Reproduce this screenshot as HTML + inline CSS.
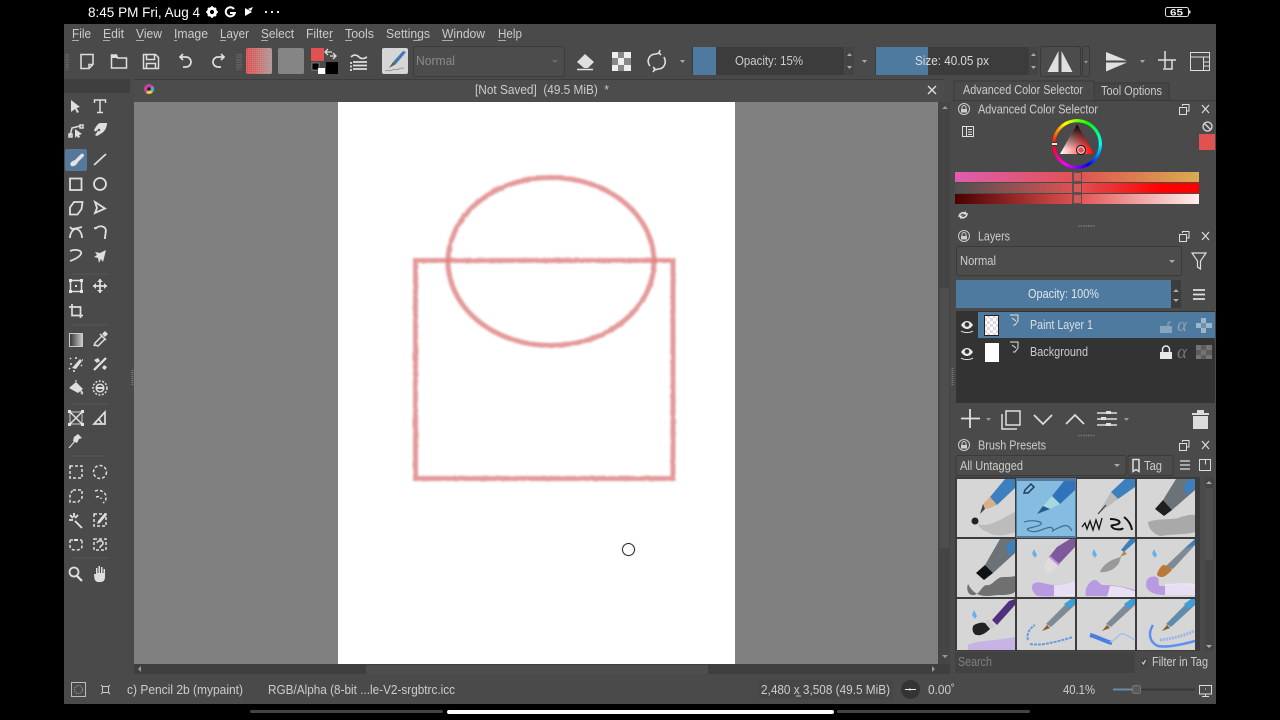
<!DOCTYPE html>
<html><head><meta charset="utf-8"><style>
html,body{margin:0;padding:0;background:#000;width:1280px;height:720px;overflow:hidden}
svg{position:absolute;left:0;top:0;filter:blur(.35px)}
text{font-family:"Liberation Sans",sans-serif;font-size:13px;fill:#cccccc}
.i{fill:none;stroke:#dedede;stroke-width:1.5}
.f{fill:#dedede;stroke:none}
#wheel{position:absolute;left:1052px;top:119px;width:50px;height:50px;border-radius:50%;filter:blur(.3px);background:conic-gradient(from 270deg,#f00,#ff0,#0f0,#0ff,#00f,#f0f,#f00);-webkit-mask:radial-gradient(circle,transparent 21.5px,#000 22px);mask:radial-gradient(circle,transparent 21.5px,#000 22px)}
</style></head><body>
<svg width="1280" height="720" viewBox="0 0 1280 720" xmlns="http://www.w3.org/2000/svg">
<defs>
<filter id="rough" x="-5%" y="-5%" width="110%" height="110%"><feTurbulence type="fractalNoise" baseFrequency="0.2" numOctaves="2" seed="3"/><feDisplacementMap in="SourceGraphic" scale="1.6"/><feGaussianBlur stdDeviation="1.1"/></filter>
<linearGradient id="g1"><stop offset="0" stop-color="#e05cb0"/><stop offset=".5" stop-color="#e05252"/><stop offset="1" stop-color="#d8ac50"/></linearGradient>
<linearGradient id="g2"><stop offset="0" stop-color="#505050"/><stop offset=".5" stop-color="#e05252"/><stop offset=".85" stop-color="#ff0000"/><stop offset="1" stop-color="#ff0000"/></linearGradient>
<linearGradient id="g3"><stop offset="0" stop-color="#4a0000"/><stop offset=".5" stop-color="#e05252"/><stop offset="1" stop-color="#fff0f0"/></linearGradient>
<linearGradient id="t1" x1="0" x2="1" y1="0" y2="0"><stop offset="0" stop-color="#fff"/><stop offset="1" stop-color="#f00"/></linearGradient>
<linearGradient id="t2" x1="0" x2="0" y1="0" y2="1"><stop offset="0" stop-color="#000"/><stop offset=".85" stop-color="#000" stop-opacity="0"/></linearGradient>
<linearGradient id="grad" x1="0" x2="1"><stop offset="0" stop-color="#333"/><stop offset="1" stop-color="#ccc"/></linearGradient>
<linearGradient id="fg" x1="0" x2="1"><stop offset="0" stop-color="#e05252"/><stop offset="1" stop-color="#b09a9a"/></linearGradient>
<pattern id="chk" width="6" height="6" patternUnits="userSpaceOnUse"><rect width="6" height="6" fill="#fff"/><rect width="3" height="3" fill="#e2d8d8"/><rect x="3" y="3" width="3" height="3" fill="#e2d8d8"/></pattern>
<pattern id="dots" width="2" height="2" patternUnits="userSpaceOnUse"><rect width="1" height="1" fill="#e8b0b0"/></pattern>
</defs>

<rect x="64" y="24" width="1152" height="680" fill="#4a4a4a"/>
<text x="88" y="17" textLength="112" lengthAdjust="spacingAndGlyphs" style="font-size:14px;fill:#fff">8:45 PM Fri, Aug 4</text>
<circle cx="212" cy="12" r="3.6" fill="none" stroke="#fff" stroke-width="3"/>
<path d="M212 6v2M212 16v2M206 12h2M216 12h2M208 8l1.500 1.500M216 8l-1.500 1.500M208 16l1.500-1.500M216 16l-1.500-1.500" stroke="#fff" stroke-width="1.6"/>
<path d="M234 9a4.600 4.600 0 1 0 .8 4H230" fill="none" stroke="#fff" stroke-width="2"/>
<path d="M245 8l7 4-7 4zM248 9l5-2-2 4z" fill="#fff"/>
<circle cx="266" cy="12" r="1.1" fill="#fff"/><circle cx="272" cy="12" r="1.1" fill="#fff"/><circle cx="278" cy="12" r="1.1" fill="#fff"/>
<rect x="1165.500" y="7.500" width="23" height="9" rx="2" fill="none" stroke="#ddd"/><rect x="1189" y="10.500" width="1.500" height="3" fill="#ddd"/>
<text x="1170" y="15.500" textLength="13" lengthAdjust="spacingAndGlyphs" style="font-size:9px;fill:#eee;font-weight:bold">65</text>

<g>
<text x="72" y="38" textLength="19" lengthAdjust="spacingAndGlyphs">File</text>
<text x="103" y="38" textLength="21" lengthAdjust="spacingAndGlyphs">Edit</text>
<text x="136" y="38" textLength="26" lengthAdjust="spacingAndGlyphs">View</text>
<text x="174" y="38" textLength="34" lengthAdjust="spacingAndGlyphs">Image</text>
<text x="220" y="38" textLength="29" lengthAdjust="spacingAndGlyphs">Layer</text>
<text x="261" y="38" textLength="33" lengthAdjust="spacingAndGlyphs">Select</text>
<text x="306" y="38" textLength="27" lengthAdjust="spacingAndGlyphs">Filter</text>
<text x="345" y="38" textLength="29" lengthAdjust="spacingAndGlyphs">Tools</text>
<text x="386" y="38" textLength="44" lengthAdjust="spacingAndGlyphs">Settings</text>
<text x="442" y="38" textLength="43" lengthAdjust="spacingAndGlyphs">Window</text>
<text x="498" y="38" textLength="24" lengthAdjust="spacingAndGlyphs">Help</text>
</g>
<path d="M72 40.500h7M103 40.500h7M136 40.500h8M174 40.500h3M220 40.500h6M261 40.500h7M329 40.500h4M345 40.500h7M413 40.500h6M442 40.500h11M498 40.500h8" stroke="#aaa"/>

<path d="M66 54v16M68 54v16M241 54v16M237 54v16M239 54v16" stroke="#777" stroke-dasharray="1.500 1"/>
<path class="i" d="M81 54.500h12v10l-4 4h-8zM93 64.500h-4v4"/>
<path class="i" d="M111.500 55v13h15V58h-9l-1-3z"/><path class="f" d="M112 55h5l1 3h-6z"/>
<path class="i" d="M143.500 54.500h12l3 3v11h-15zM146.500 54.500v5h8v-5M146.500 68.500v-5h9v5"/>
<path class="i" style="stroke-width:1.700" d="M183 54l-3 3 3 3M180 57h6a5 5 0 0 1 0 10h-3"/>
<path class="i" style="stroke-width:1.700" d="M221 54l3 3-3 3M224 57h-6a5 5 0 0 0 0 10h3"/>
<rect x="246" y="48" width="26" height="26" rx="2" fill="url(#fg)"/><rect x="246" y="48" width="26" height="26" rx="2" fill="url(#dots)" opacity=".3"/>
<rect x="278" y="48" width="26" height="26" rx="2" fill="#858585"/>
<rect x="311" y="48" width="13" height="13" fill="#e05252"/>
<rect x="326" y="62" width="12" height="12" fill="#000"/>
<rect x="312" y="63" width="7" height="7" fill="#000" stroke="#ccc" stroke-width=".5"/><rect x="318" y="68" width="7" height="6" fill="#fff"/>
<path d="M328 49l-3 3 3 3M332 52h-6M333 53l3 3-3 3M330 56h6" fill="none" stroke="#ddd" stroke-width="1.300"/>
<path class="i" style="stroke-width:1.700" d="M351 57c3-3 6-2 8 0s5 2 8 0M353 62h14M353 65.500h14M353 69h14"/><path d="M351 62v2M351 65.500v2M351 69v2" stroke="#e4e4e4" stroke-width="1.700"/>
<rect x="382" y="48" width="26" height="26" rx="2" fill="#d6d6d6"/><path d="M393 62l10-11 3 1-10 12z" fill="#3f78b4"/><path d="M393 62l-4 6 7-4z" fill="#6b5a40"/><path d="M385 71c3-2 4 1 7-1s4 1 7-1 3 0 5-1" stroke="#999" fill="none"/>
<rect x="413.500" y="46.500" width="151" height="30" rx="2" fill="#4c4c4c" stroke="#3c3c3c"/>
<text x="416" y="65" textLength="39" lengthAdjust="spacingAndGlyphs" style="fill:#8a8a8a">Normal</text>
<path d="M552 60h6l-3 3z" fill="#6a6a6a"/>
<path d="M577 62l8-8 9 8-6 6h-4z" fill="#e0e0e0"/><path d="M577 69.500h16" stroke="#e4e4e4" stroke-width="1.500"/>
<rect x="612" y="52" width="19" height="19" fill="#888"/><path d="M612 52h6v6h-6zM624 52h7v6h-7zM618 58h6v7h-6zM612 65h6v6h-6zM624 65h7v6h-7z" fill="#eee"/>
<path class="i" style="stroke-width:1.600" d="M650 66c-4-5-1-12 6-12l3-1M664 57c3 6 0 12-6 12l-3 1M660 50l-1 3 2 2M653 72l2-3-2-2"/>
<path d="M680 60h5l-2.500 3z" fill="#aaa"/>
<rect x="692" y="47" width="152" height="28" fill="#3c3c3c"/><rect x="693" y="47" width="23" height="28" fill="#4f7a9f"/>
<text x="735" y="65" textLength="68" lengthAdjust="spacingAndGlyphs">Opacity: 15%</text>
<rect x="845" y="47" width="9" height="28" fill="#444"/><path d="M847 56l2.500-3 2.500 3zM847 66l2.500 3 2.500-3z" fill="#aaa"/>
<path d="M862 60h5l-2.500 3z" fill="#aaa"/>
<rect x="875" y="47" width="154" height="28" fill="#3c3c3c"/><rect x="876" y="47" width="52" height="28" fill="#4f7a9f"/>
<text x="915" y="65" textLength="74" lengthAdjust="spacingAndGlyphs" style="fill:#dcdcdc">Size: 40.05 px</text>
<rect x="1030" y="47" width="8" height="28" fill="#444"/><path d="M1031 56l2.500-3 2.500 3zM1031 66l2.500 3 2.500-3z" fill="#aaa"/>
<rect x="1040.500" y="46.500" width="40" height="30" rx="2" fill="#4c4c4c" stroke="#3a3a3a"/>
<path d="M1058.500 51v21h-11zM1061.500 51v21h11z" fill="#e0e0e0"/>
<rect x="1082.500" y="46.500" width="7" height="30" rx="2" fill="#4c4c4c" stroke="#3a3a3a"/><path d="M1084 61h4l-2 2.500z" fill="#999"/>
<path d="M1106 52l21 8.500h-21zM1106 62.500h21l-21 9z" fill="#e0e0e0"/>
<path d="M1140 60h5l-2.500 3z" fill="#aaa"/>
<path class="i" d="M1165 51v17M1158 60h18M1163 69h9v-9"/>
<rect x="1190.500" y="52.500" width="19" height="18" fill="none" stroke="#ddd"/><path d="M1190.500 57h19M1203.500 57v14M1203.500 62h6M1203.500 66h6" stroke="#ddd"/>

<rect x="64" y="79" width="66" height="14" fill="#3f3f3f"/>
<path d="M132.500 370v16" stroke="#777" stroke-dasharray="1 1" stroke-width="2"/>
<g id="tools">
<path class="f" d="M71 100l9 7-3.500 1 2.500 4-2 1-2-4-4 3z"/>
<path class="i" d="M94.500 103v-3h11v3M100 100v12M97 112.500h6"/>
<path class="i" d="M70 136l2-8 8-2"/><rect x="69" y="134" width="3" height="3" class="i"/><rect x="80" y="125" width="3" height="3" class="i"/><path class="f" d="M75 129l7 5-3 1 1 2-2 1-1-2-2 2z"/>
<path class="f" d="M100 123l7 0c0 4-2 8-5 10l-5 3-2-1 3-4-1-1c-1 2-2 2-3 0 2-3 3-6 6-7z"/><circle cx="99" cy="130" r="1.200" fill="#4a4a4a"/>
<rect x="65" y="149" width="22" height="22" rx="2" fill="#56789a"/>
<path d="M71 166c-2-4 2-5 4-6l6-6c2-1 3 0 3 2l-6 6c-1 2-3 5-7 4z" fill="#e4e4e4"/>
<path class="i" style="stroke-width:1.700" d="M94 165l12-11"/>
<rect x="70" y="178.500" width="11.500" height="11.500" class="i" style="stroke-width:1.800"/>
<circle cx="100" cy="184" r="6" class="i" style="stroke-width:1.800"/>
<path class="i" style="stroke-width:1.800" d="M74 202h8.500l-1 7-4 5.500H70v-7z"/>
<path class="i" style="stroke-width:1.800" d="M95 202l10 6.500L95 213l2-5z"/>
<path class="i" style="stroke-width:1.800" d="M70 238c0-5 3-9 6-9s6 4 6 9M70 227l2 2 6-1 4-1"/>
<path class="i" style="stroke-width:1.800" d="M95 229c4-4 8-3 10-1s0 6 0 10M94 228h3M104 238h2"/>
<path class="i" style="stroke-width:1.800" d="M70 251c5-2 10-1 11 1s-2 6-11 9"/>
<path class="f" d="M106 250l-3 12-2-3-2 4-1-5-4-1 3-2-2-3 5 1z"/>
<rect x="70.500" y="280.500" width="11" height="11" class="i"/><path d="M69 279h3v3h-3zM80 279h3v3h-3zM69 290h3v3h-3zM80 290h3v3h-3zM75 285h2v2h-2z" fill="#e4e4e4"/>
<path class="i" style="stroke-width:1.700" d="M93 286h14M100 279v14"/><path class="f" d="M93 286l3-3v6zM107 286l-3-3v6zM100 279l-3 3h6zM100 293l-3-3h6z"/>
<path class="i" style="stroke-width:1.700" d="M72 304v11.500h11M69 307h11.500v11"/>
<rect x="69.500" y="333.500" width="13" height="13" fill="url(#grad)" stroke="#ccc"/>
<path class="i" d="M95 345l-1 1 1-3 7-7 3 3-7 7zM100 334l6 6"/><path class="f" d="M102 334l3-3 3 3-3 3z"/>
<path class="f" d="M72 368l8-9 2 2-6 8z"/><path d="M70 358l1 1M70 364h2M74 372v-2M81 365l1 1M76 357v2M83 360h-1M69 369l1-1" stroke="#e4e4e4" stroke-width="1.500"/>
<path d="M94 370l12-12" stroke="#e4e4e4" stroke-width="2.200"/><path class="f" d="M94 360l4-2 2 3-3 2zM104 365l3 2-2 3-3-2z"/>
<path class="f" d="M69 388l7-6 7 7-5 4z"/><path d="M81 391c2 1 2 3 1 3s-1-2-1-3zM76 382v-2" stroke="#e4e4e4"/>
<circle cx="100" cy="388" r="7" class="i" stroke-dasharray="2 1.500"/><circle cx="100" cy="388" r="3.800" class="i"/><path class="f" d="M96 387h8v2h-8z"/>
<rect x="70" y="412" width="12" height="12" class="i" style="stroke:#ccc;stroke-width:1"/><path class="i" d="M70 412l12 12M82 412l-12 12"/><path d="M68 410h3v3h-3zM81 410h3v3h-3zM68 423h3v3h-3zM81 423h3v3h-3z" fill="#e4e4e4"/>
<path class="i" style="stroke-width:1.700" d="M94 424l11-12v12zM99 419l3 5"/>
<path class="f" d="M74 437l4-3 4 4-3 1-2 4-4-2z"/><path d="M69 448l6-7" stroke="#e4e4e4"/>
<rect x="70" y="466" width="12" height="12" class="i" stroke-dasharray="3 2"/>
<circle cx="100" cy="472" r="6.500" class="i" stroke-dasharray="3 2"/>
<path class="i" stroke-dasharray="3 2" d="M73 490h9v8l-4 4h-8v-8z"/>
<path class="i" stroke-dasharray="3 2" d="M95 491c5-2 11 1 11 6s-2 5-3 6M96 497c3-1 5 0 5 2"/>
<path d="M70 515l3 3M74 513v4M78 515l-3 3M69 520h4M75 521l7 7" stroke="#e4e4e4" stroke-width="1.800"/>
<rect x="94" y="514" width="12" height="12" class="i" stroke-dasharray="3 2"/><path class="f" d="M105 513l2 2-1 1-6 7-3 1 1-3 6-7z"/>
<path class="i" stroke-dasharray="3 2" d="M70 540h12M70 540v6c0 3 2 4 6 4s6-1 6-4v-6"/><rect x="74" y="539" width="4" height="2" fill="#e4e4e4"/>
<path class="i" stroke-dasharray="3 2" d="M94 539h12v11H94z"/><path class="i" d="M97 543c1-3 6-3 6 0s-3 2-3 5"/>
<circle cx="74" cy="572" r="4.500" class="i" style="stroke-width:1.800"/><path d="M77 576l5 5" stroke="#e4e4e4" stroke-width="2.200"/>
<path class="f" d="M94 574l2 0v-6h1.500v5h1v-7h1.500v7h1v-6h1.500v6h1v-4h1.500v8c0 3-1.500 5-4.500 5h-2c-2 0-3-1-4-3z"/>
</g>
<path d="M72 274h36M72 325h36M72 404h36M72 456h36M72 558h36" stroke="#555"/>

<rect x="134" y="79" width="810" height="24" fill="#4c4c4c"/>
<path d="M134 79.500h810" stroke="#3c3c3c"/>
<circle cx="149" cy="89" r="5" fill="#d040a0"/><path d="M149 89l4 -3a5 5 0 0 1 0 6z" fill="#40b0d0"/><path d="M149 89l-3 4a5 5 0 0 0 7-1z" fill="#e0d040"/><circle cx="149" cy="89" r="1.800" fill="#222"/>
<text x="475" y="94" textLength="134" lengthAdjust="spacingAndGlyphs" xml:space="preserve">[Not Saved]  (49.5 MiB)  *</text>
<path d="M928 86l8 8M936 86l-8 8" stroke="#ddd" stroke-width="1.400"/>
<rect x="134" y="102" width="804" height="562" fill="#808080"/>
<rect x="338" y="102" width="397" height="562" fill="#fff"/>
<g filter="url(#rough)" fill="none" stroke="#dd8080" stroke-opacity=".8" stroke-width="5">
<ellipse cx="551" cy="261.500" rx="103" ry="84"/>
<rect x="415.500" y="260.500" width="257.500" height="218"/>
</g>
<circle cx="628.500" cy="549.500" r="6" fill="none" stroke="#222"/>
<circle cx="628.500" cy="549.500" r="7" fill="none" stroke="#eee" stroke-width=".8"/>
<rect x="938" y="102" width="12" height="562" fill="#454545"/>
<rect x="940" y="288" width="9" height="260" fill="#4e4e4e"/>
<path d="M942 109l3-3 3 3zM942 655l3 3 3-3z" fill="#999"/>
<rect x="134" y="664" width="816" height="10" fill="#3f3f3f"/>
<rect x="366" y="665" width="342" height="9" rx="2" fill="#4e4e4e"/>
<path d="M141 666l-3 3 3 3zM932 666l3 3-3 3z" fill="#999"/>

<path d="M954 100V81h140v21" fill="#4a4a4a" stroke="#3a3a3a"/>
<text x="963" y="94" textLength="120" lengthAdjust="spacingAndGlyphs">Advanced Color Selector</text>
<path d="M1094 100V83h75v17" fill="#454545" stroke="#3a3a3a"/>
<text x="1101" y="95" textLength="61" lengthAdjust="spacingAndGlyphs">Tool Options</text>
<path d="M953 100.500h262" stroke="#3a3a3a"/>

<g id="dockhdr">
<circle cx="964" cy="109" r="5.500" fill="none" stroke="#ccc"/><rect x="961" y="109" width="6" height="3.500" fill="#ccc"/><path d="M962 109v-1.500a2 2 0 0 1 4 0V109" fill="none" stroke="#ccc"/>
<rect x="1179.500" y="107.500" width="7" height="7" fill="none" stroke="#ddd"/><path d="M1182.500 106v-1.500h6.500v6.500h-2.500" fill="none" stroke="#ddd"/>
<path d="M1202 105l7 8M1209 105l-7 8" stroke="#ddd" stroke-width="1.200"/>
</g>
<text x="978" y="113.500" textLength="120" lengthAdjust="spacingAndGlyphs">Advanced Color Selector</text>
<rect x="962.500" y="126.500" width="11" height="10" fill="none" stroke="#ddd"/><path d="M966.500 127v9M968 129.500h4M968 132h4M968 134.500h4" stroke="#ddd"/>
<circle cx="1207.500" cy="126.500" r="4.500" fill="none" stroke="#ddd" stroke-width="1.300"/><path d="M1204.500 123.500l6 6" stroke="#ddd" stroke-width="1.300"/>
<rect x="1199" y="134" width="16" height="16" fill="#e05252"/>
<polygon points="1077,124 1060,154 1094,154" fill="url(#t1)"/>
<polygon points="1077,124 1060,154 1094,154" fill="url(#t2)"/>
<circle cx="1081" cy="150" r="4.500" fill="#e05252" stroke="#111" stroke-width="1"/><circle cx="1081" cy="150" r="3.300" fill="none" stroke="#eee" stroke-width=".8"/>
<rect x="955" y="172" width="244" height="10" fill="url(#g1)"/>
<rect x="955" y="183" width="244" height="10" fill="url(#g2)"/>
<rect x="955" y="194" width="244" height="10" fill="url(#g3)"/>
<rect x="1072" y="172" width="10" height="32" fill="#5f5050"/>
<rect x="1074" y="173" width="7" height="8" fill="#d85858"/><rect x="1074" y="184" width="7" height="8" fill="#d85858"/><rect x="1074" y="195" width="7" height="8" fill="#d85858"/>
<path class="i" d="M959 217a4.500 4.500 0 0 1 7-3.500M967 213a4.500 4.500 0 0 1-7 4"/><path class="f" d="M966 211v3.500h-3zM960 219v-3.500h3z"/>
<path d="M1078 226h17" stroke="#777" stroke-dasharray="1.500 1" stroke-width="1.500"/>

<g transform="translate(0 127)"><circle cx="964" cy="109" r="5.500" fill="none" stroke="#ccc"/><rect x="961" y="109" width="6" height="3.500" fill="#ccc"/><path d="M962 109v-1.500a2 2 0 0 1 4 0V109" fill="none" stroke="#ccc"/><rect x="1179.500" y="107.500" width="7" height="7" fill="none" stroke="#ddd"/><path d="M1182.500 106v-1.500h6.500v6.500h-2.500" fill="none" stroke="#ddd"/><path d="M1202 105l7 8M1209 105l-7 8" stroke="#ddd" stroke-width="1.200"/></g>
<text x="978" y="240.500" textLength="32" lengthAdjust="spacingAndGlyphs">Layers</text>
<rect x="956.500" y="246.500" width="225" height="29" rx="2" fill="#4c4c4c" stroke="#3a3a3a"/>
<text x="960" y="265" textLength="36" lengthAdjust="spacingAndGlyphs">Normal</text>
<path d="M1169 260h6l-3 3z" fill="#aaa"/>
<path class="i" style="stroke-width:1.200" d="M1192 253h14l-5.500 8v8l-3-2v-6z"/>
<rect x="956" y="280" width="215" height="28" fill="#4f7a9f"/>
<rect x="1171" y="280" width="10" height="28" fill="#3c3c3c"/><path d="M1173 292l3-3 3 3zM1173 299l3 3 3-3z" fill="#aaa"/>
<text x="1028" y="298" textLength="71" lengthAdjust="spacingAndGlyphs" style="fill:#dfe5ea">Opacity: 100%</text>
<path d="M1193 290h12M1193 294.500h12M1193 299h12" stroke="#e0e0e0" stroke-width="1.800"/>
<rect x="956" y="311" width="259" height="92" fill="#333"/>
<rect x="978" y="312" width="237" height="26" fill="#4f7a9f"/>
<path d="M961 325c2-3 4-4 6-4s4 1 6 4c-2 3-4 4-6 4s-4-1-6-4z" fill="#e8e8e8"/><circle cx="967" cy="324.500" r="2.300" fill="#333"/><path d="M961 331c3 2 9 2 12 0" stroke="#e8e8e8" fill="none"/>
<path d="M961 352c2-3 4-4 6-4s4 1 6 4c-2 3-4 4-6 4s-4-1-6-4z" fill="#e8e8e8"/><circle cx="967" cy="351.500" r="2.300" fill="#333"/><path d="M961 358c3 2 9 2 12 0" stroke="#e8e8e8" fill="none"/>
<rect x="984.500" y="315.500" width="14" height="20" fill="url(#chk)" stroke="#222"/>
<rect x="985" y="343" width="14" height="19" fill="#fff"/>
<path d="M1010 315h8v6l-3 4h-2M1012 318l4 3" fill="none" stroke="#e0e0e0"/>
<path d="M1010 342h8v6l-3 4h-2M1012 345l4 3" fill="none" stroke="#e0e0e0"/>
<text x="1030" y="329" textLength="63" lengthAdjust="spacingAndGlyphs" style="fill:#d8dfe5">Paint Layer 1</text>
<text x="1030" y="356" textLength="58" lengthAdjust="spacingAndGlyphs">Background</text>
<path d="M1160 326h12v7h-12z" fill="#86a4bb"/><path d="M1168 326v-2a2.500 2.500 0 0 1 3-2" stroke="#86a4bb" fill="none" stroke-width="1.400"/>
<text x="1177" y="331" style="font-size:19px;font-style:italic;fill:#86a4bb;font-family:'Liberation Serif',serif">α</text>
<path d="M1201 318h5v5h-5zM1196 323h5v5h-5zM1206 323h6v5h-6zM1201 328h5v5h-5z" fill="#9db6c9"/><path d="M1201 323h5v5h-5z" fill="#6e93ae"/>
<path d="M1160 352h12v7h-12z" fill="#e8e8e8"/><path d="M1162.500 352v-2.500a3.500 3.500 0 0 1 7 0v2.500" stroke="#e8e8e8" fill="none" stroke-width="1.500"/>
<text x="1177" y="358" style="font-size:19px;font-style:italic;fill:#777;font-family:'Liberation Serif',serif">α</text>
<rect x="1196" y="345" width="16" height="14" fill="#5c5c5c"/><path d="M1196 345h5v5h-5zM1206 345h6v5h-6zM1201 350h5v5h-5zM1196 355h5v4h-5zM1206 355h6v4h-6z" fill="#747474"/>
<path d="M961 418.500h19M970 409v19" stroke="#e0e0e0" stroke-width="1.800"/><path d="M986 418h5l-2.500 3z" fill="#999"/>
<path class="i" d="M1006 411h14v14h-14z"/><path class="i" d="M1002 414v15h15"/>
<path class="i" style="stroke-width:1.700" d="M1034 415l9 9 9-9"/>
<path class="i" style="stroke-width:1.700" d="M1066 424l9-9 9 9"/>
<path d="M1097 413h20M1097 419h20M1097 425h20" stroke="#e0e0e0" stroke-width="1.500"/><rect x="1106" y="411" width="5" height="3" fill="#e0e0e0"/><rect x="1101" y="417" width="5" height="3" fill="#e0e0e0"/><rect x="1106" y="423" width="5" height="3" fill="#e0e0e0"/>
<path d="M1124 418h5l-2.500 3z" fill="#999"/>
<path d="M1192 413h17v2h-17zM1197 410h7v3h-7zM1193 416h15v13h-15z" fill="#dcdcdc"/>
<path d="M1078 435.500h17" stroke="#777" stroke-dasharray="1.500 1" stroke-width="1.500"/>
<path d="M952.500 368v18" stroke="#777" stroke-dasharray="1 1" stroke-width="2"/>

<g transform="translate(0 336)"><circle cx="964" cy="109" r="5.500" fill="none" stroke="#ccc"/><rect x="961" y="109" width="6" height="3.500" fill="#ccc"/><path d="M962 109v-1.500a2 2 0 0 1 4 0V109" fill="none" stroke="#ccc"/><rect x="1179.500" y="107.500" width="7" height="7" fill="none" stroke="#ddd"/><path d="M1182.500 106v-1.500h6.500v6.500h-2.500" fill="none" stroke="#ddd"/><path d="M1202 105l7 8M1209 105l-7 8" stroke="#ddd" stroke-width="1.200"/></g>
<text x="978" y="449.500" textLength="68" lengthAdjust="spacingAndGlyphs">Brush Presets</text>
<rect x="956" y="455.500" width="170" height="20" rx="2" fill="#4c4c4c" stroke="#3a3a3a"/>
<text x="960" y="470" textLength="63" lengthAdjust="spacingAndGlyphs">All Untagged</text>
<path d="M1114 464h6l-3 3z" fill="#aaa"/>
<rect x="1128" y="455.500" width="45" height="20" rx="2" fill="#4c4c4c" stroke="#3a3a3a"/>
<path class="i" d="M1133 459.500h6v12l-3-2-3 2z"/>
<text x="1144" y="470" textLength="18" lengthAdjust="spacingAndGlyphs">Tag</text>
<path d="M1180 461h10M1180 465h10M1180 469h10" stroke="#e0e0e0" stroke-width="1.300"/>
<rect x="1199.500" y="459.500" width="11" height="11" fill="none" stroke="#ddd"/><path d="M1205.500 459.500v5" stroke="#ddd"/>

<rect x="955" y="477" width="245" height="174" fill="#3c3c3c"/>
<rect x="1016" y="478" width="60" height="60" fill="#56789a"/>
<!-- row 1 -->
<rect x="957" y="479" width="58" height="58" fill="#d6d6d6"/>
<path d="M1005 479h10v9l-18 17-7-8z" fill="#3d80bd"/><path d="M990 497l7 8-7 3-5 1-2-5z" fill="#d8b088"/><path d="M983 504l2 5-5 5z" fill="#444"/>
<path d="M978 524c12 4 24-6 37-12v20c-13 5-22 4-28 0-5-2-8-5-9-8z" fill="#aaa" opacity=".6"/><circle cx="975" cy="521" r="3.500" fill="#222"/>
<rect x="1017" y="481" width="58" height="55" fill="#85bce0"/>
<path d="M1064 481h11v9l-15 14-8-8z" fill="#2f74ba"/><path d="M1052 496l8 8-10 5-7-3z" fill="#a6d8dc"/><path d="M1043 506l7 3-13 5z" fill="#2a5a8c"/><path d="M1025 490l6-6 3 3-6 6-4 0z" fill="none" stroke="#1f3d66" stroke-width="1.500"/>
<path d="M1024 522c8-3 22 0 16 3s-18 3-10 6 18-6 22-3-4 5 4 1 12-6 16 2" fill="none" stroke="#3d6c94" stroke-width="1.200"/>
<rect x="1077" y="479" width="58" height="58" fill="#d6d6d6"/>
<path d="M1125 479h10v8l-17 12-7-7z" fill="#3d80bd"/><path d="M1111 492l7 7-8 6-12 9z" fill="#bbb"/><path d="M1098 514l8-9" stroke="#333"/>
<path d="M1082 527l3-4 2 6 3-8 3 9 3-10 3 9 3-11" fill="none" stroke="#111" stroke-width="1.300"/><path d="M1110 519c8 0 12 3 8 5s-8 0-6 3 10 3 11 1M1124 517c4 3 7 7 8 13" fill="none" stroke="#111" stroke-width="2"/>
<rect x="1137" y="479" width="58" height="58" fill="#d6d6d6"/>
<path d="M1176 479h19v11l-23 20-9-10z" fill="#6b7278"/><path d="M1183 485l8-6h4v8l-8 9z" fill="#3d80bd"/><path d="M1163 500l9 10-8 6-9-7z" fill="#1f1f1f"/>
<path d="M1148 522c10-4 24-2 30-4s12-4 17-3v17c-10 3-24 2-34 4-7-1-13-8-13-14z" fill="#999" opacity=".75"/>
<!-- row 2 -->
<rect x="957" y="539" width="58" height="58" fill="#d6d6d6"/>
<path d="M1000 539h15v14l-22 20-8-8z" fill="#6b7278"/><path d="M1006 545l9-6v12l-6 5z" fill="#3d80bd"/><path d="M985 565l8 8-9 7-8-7z" fill="#111"/>
<path d="M968 584c-2 5 0 12 6 11s7-8 12-10c6 2 10-8 17-8 5 0 8 0 12-1v16c-4 3-10 3-16 3-8 0-22 6-31-11z" fill="#444" opacity=".7"/>
<rect x="1017" y="539" width="58" height="58" fill="#d6d6d6"/>
<path d="M1057 547l13-8h5v8l-17 18-9-8z" fill="#7e5a9c"/><path d="M1049 557l9 8-7 7-6 1-1-8z" fill="#ddd"/><path d="M1049 556l10 9" stroke="#c490e0" stroke-width="2"/>
<path d="M1032 554l2-5 3 6-2 3z" fill="#6ab0e8"/>
<path d="M1033 584c6-4 10 0 20 1 8 0 14-2 22-4v12c-12 3-26 4-36 3-7-1-8-10-6-12z" fill="#b89ae0"/><path d="M1054 585c8 0 14-2 21-4v15h-21z" fill="#ede6f6" opacity=".9"/>
<rect x="1077" y="539" width="58" height="58" fill="#d6d6d6"/>
<path d="M1100 572c3-8 12-13 21-15l-2 6c-4 6-11 10-19 9z" fill="#999"/><path d="M1120 557l4-6 3 3z" fill="#b09040"/><path d="M1124 552l11-10v-3h-5l-9 11z" fill="#3d80bd"/>
<path d="M1092 554l2-5 3 6-2 3z" fill="#6ab0e8"/>
<path d="M1086 596c-2-8 4-16 9-16 3 0 5 5 8 5 12 0 22 2 32 5v6z" fill="#b89ae0"/><path d="M1110 586c10 0 18 3 25 5v6h-28z" fill="#f0ecf6" opacity=".85"/>
<rect x="1137" y="539" width="58" height="58" fill="#d6d6d6"/>
<path d="M1166 566l20-19 9-8v6l-22 24z" fill="#7f8a94"/><path d="M1184 549l11-10v6z" fill="#3d80bd"/><path d="M1163 565c4 0 9 3 9 5-3 3-6 6-9 7-4 0-6-1-6-3 1-3 3-7 6-9z" fill="#b87a38"/>
<path d="M1152 554l2-5 3 6-2 3z" fill="#6ab0e8"/>
<path d="M1146 584c0-8 9-9 12-6 2 3-1 6 2 8 10 0 24-4 35 0v9h-30c-8 0-19-2-19-11z" fill="#b89ae0"/><path d="M1165 584c10 0 20-2 30 0v11h-30z" fill="#efeaf6" opacity=".85"/>
<!-- row 3 -->
<rect x="957" y="599" width="58" height="51" fill="#d6d6d6"/>
<path d="M992 620l17-19 6-2v6l-18 20z" fill="#50307e"/><path d="M988 619l7 7-3 4-7-7z" fill="#ccc"/><path d="M974 625c4-2 8-3 11-2l5 6c-4 4-9 7-13 6-4 0-6-7-3-10z" fill="#222"/>
<path d="M972 615l2-5 3 6-2 3z" fill="#6ab0e8"/>
<path d="M968 645c8-5 28-4 47-8v13h-47z" fill="#c8b4e4"/>
<rect x="1017" y="599" width="58" height="51" fill="#d6d6d6"/>
<path d="M1046 624l22-22 7-3v6l-24 22z" fill="#7f8a94"/><path d="M1064 604l7-5 4 0v4l-6 6z" fill="#3d9ed8"/><path d="M1042 631l5-6 3 3z" fill="#8a6030"/>
<path d="M1028 640c-2-6 2-12 7-15M1030 644c12 2 26-2 43-7" fill="none" stroke="#6a9ae0" stroke-width="2" stroke-dasharray="3 1"/>
<rect x="1077" y="599" width="58" height="51" fill="#d6d6d6"/>
<path d="M1106 624l22-22 7-3v6l-24 22z" fill="#7f8a94"/><path d="M1124 604l7-5 4 0v4l-6 6z" fill="#3d9ed8"/><path d="M1102 631l5-6 3 3z" fill="#8a6030"/>
<path d="M1090 635c8 2 14 6 22 8" fill="none" stroke="#4a7ee0" stroke-width="4"/><path d="M1110 642c6-2 10-10 14-8s8 4 11 6" fill="none" stroke="#a8c0e8" stroke-width="1.500"/>
<rect x="1137" y="599" width="58" height="51" fill="#d6d6d6"/>
<path d="M1166 624l22-22 7-3v6l-24 22z" fill="#5f8ca8"/><path d="M1184 604l7-5 4 0v4l-6 6z" fill="#3d9ed8"/><path d="M1162 631l5-6 3 3z" fill="#8a6030"/>
<path d="M1153 625c-5 8-4 17 5 21 10 2 26-2 37-5" fill="none" stroke="#5f90ee" stroke-width="2.500"/><path d="M1160 640c10-1 24-4 34-9" fill="none" stroke="#80a8ee" stroke-width="3" stroke-dasharray="2 1" opacity=".7"/>
<rect x="1205" y="477" width="9" height="174" fill="#444"/>
<rect x="1205" y="488" width="8" height="72" fill="#4e4e4e"/>
<path d="M1206 484l3-3 3 3zM1206 645l3 3 3-3z" fill="#aaa"/>
<rect x="955" y="652" width="180" height="21" fill="#424242"/>
<text x="958" y="666" textLength="34" lengthAdjust="spacingAndGlyphs" style="fill:#808080">Search</text>
<rect x="1140.500" y="657.500" width="7" height="9" fill="#444"/><path d="M1142 662l1.500 2 2-4" fill="none" stroke="#ddd"/>
<text x="1152" y="666" textLength="56" lengthAdjust="spacingAndGlyphs">Filter in Tag</text>

<rect x="71.500" y="682.500" width="14" height="14" fill="none" stroke="#bbb"/><circle cx="78.500" cy="689.500" r="4" fill="none" stroke="#aaa" stroke-dasharray="1 1"/>
<rect x="102.500" y="686.500" width="6" height="6" fill="none" stroke="#ccc"/><path d="M101 685l2 2M110 685l-2 2M101 694l2-2M110 694l-2-2" stroke="#ccc"/>
<text x="127" y="694" textLength="116" lengthAdjust="spacingAndGlyphs">c) Pencil 2b (mypaint)</text>
<text x="268" y="694" textLength="187" lengthAdjust="spacingAndGlyphs">RGB/Alpha (8-bit ...le-V2-srgbtrc.icc</text>
<rect x="758.500" y="680" width="134" height="19" fill="#464646"/>
<text x="761" y="694" textLength="129" lengthAdjust="spacingAndGlyphs">2,480 x 3,508 (49.5 MiB)</text>
<path d="M796 696h5" stroke="#ccc"/>
<circle cx="910.500" cy="689.500" r="9.500" fill="#343434"/>
<path d="M905 689.500h11" stroke="#eee"/><circle cx="910" cy="689.500" r="1" fill="#eee"/>
<text x="928" y="694" textLength="27" lengthAdjust="spacingAndGlyphs">0.00˚</text>
<text x="1063" y="694" textLength="32" lengthAdjust="spacingAndGlyphs">40.1%</text>
<path d="M1113 689.500h82" stroke="#383838" stroke-width="2"/><path d="M1113 689.500h22" stroke="#6b8ba5" stroke-width="2"/>
<rect x="1132.500" y="685.500" width="8" height="8" rx="2" fill="#5a5a5a" stroke="#777"/>
<rect x="1199.500" y="685.500" width="12" height="8.500" fill="none" stroke="#ddd"/><path d="M1205.500 694v2M1202 696.500h7M1205 689h1" stroke="#ddd"/>

<rect x="250" y="710" width="193" height="3" rx="1.500" fill="#444"/>
<rect x="447" y="710" width="387" height="4" rx="2" fill="#fff"/>
<rect x="837" y="710" width="193" height="3" rx="1.500" fill="#444"/>
</svg>
<div id="wheel"></div>
<div style="position:absolute;left:1052px;top:142px;width:5px;height:2px;background:#f0e8e8;border-top:1px solid #333;border-bottom:1px solid #333"></div>
</body></html>
